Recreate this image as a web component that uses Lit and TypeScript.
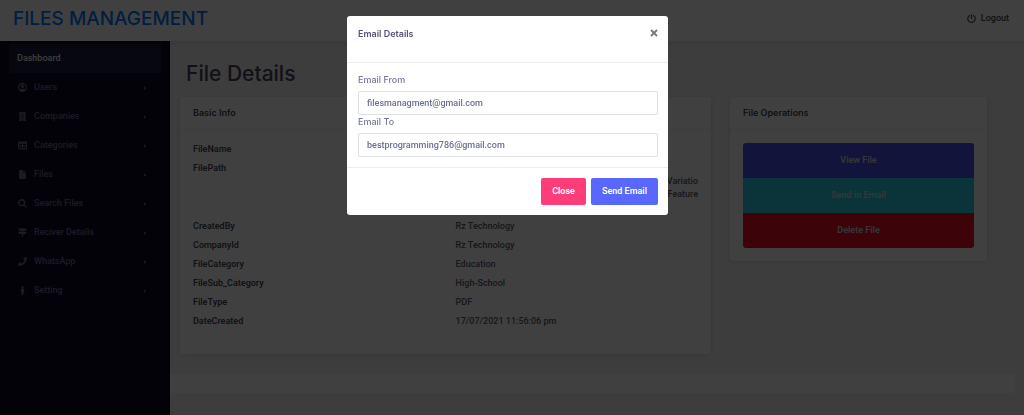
import { LitElement, html, css, svg } from "lit";
import { customElement } from "lit/decorators.js";

const icons: Record<string, unknown> = {
  user: svg`<path fill-rule="evenodd" d="M8 0a8 8 0 1 0 0 16A8 8 0 0 0 8 0zm0 2a6 6 0 0 1 5 9.300c-.6-.9-1.600-1.300-2.600-1.300-.8 0-1.200.4-2.400.4S6.400 10 5.600 10c-1 0-2 .4-2.600 1.300A6 6 0 0 1 8 2zm0 1.200a3 3 0 1 0 0 6 3 3 0 0 0 0-6z"/>`,
  building: svg`<path fill-rule="evenodd" d="M2 0h12v1h-.5v14h.5v1H9v-3H7v3H2v-1h.5V1H2zM5 2.500v1.700h1.500V2.500zm2.300 0v1.700h1.500V2.500zm2.300 0v1.700H11V2.500zM5 5.800v1.700h1.500V5.800zm2.300 0v1.700h1.500V5.800zm2.300 0v1.700H11V5.800zM5 9v1.700h1.500V9zm2.300 0v1.700h1.500V9zm2.300 0v1.700H11V9z"/>`,
  table: svg`<path fill-rule="evenodd" d="M1.500 1h13A1.500 1.500 0 0 1 16 2.500v11a1.500 1.500 0 0 1-1.500 1.500h-13A1.500 1.500 0 0 1 0 13.500v-11A1.500 1.500 0 0 1 1.500 1zM2 5v3h5V5zm7 0v3h5V5zM2 10v3h5v-3zm7 0v3h5v-3z"/>`,
  file: svg`<path d="M2 .8A.8.8 0 0 1 2.800 0H9v4.300c0 .4.300.7.7.7H14v10.200a.8.8 0 0 1-.8.8H2.800a.8.8 0 0 1-.8-.8zM10 0l4 4h-4z"/>`,
  search: svg`<path fill-rule="evenodd" d="M6.500 0a6.500 6.500 0 0 1 5.200 10.400l4.100 4.100-1.400 1.400-4.100-4.100A6.500 6.500 0 1 1 6.500 0zm0 2.500a4 4 0 1 0 0 8 4 4 0 0 0 0-8z"/>`,
  signs: svg`<path d="M7 0h2v1h4.500L16 3l-2.500 2H9v1.500h5.500v4H9V16H7v-5.500H2.500L0 8.500l2.500-2H7V5H1.500V1H7z"/>`,
  phone: svg`<path d="M15.500.8 12.300 0c-.4 0-.7.100-.9.500L9.900 4c-.1.300 0 .7.200.9L12 6.400A11.600 11.600 0 0 1 6.400 12l-1.500-1.900c-.2-.2-.6-.3-.9-.2L.5 11.400c-.4.200-.5.500-.5.900l.8 3.100c.100.4.4.6.7.6C9.500 16 16 9.500 16 1.500c0-.3-.2-.6-.5-.7z"/>`,
  person: svg`<path d="M8 0a2 2 0 1 1 0 4 2 2 0 0 1 0-4zM6.500 4.500h3A1.500 1.500 0 0 1 11 6v4.500h-1.200V16H6.200v-5.500H5V6a1.500 1.500 0 0 1 1.500-1.500z"/>`,
  power: svg`<path fill="none" stroke="currentColor" stroke-width="2" stroke-linecap="round" d="M4.400 2.800a6.600 6.600 0 1 0 7.200 0M8 1v7"/>`,
  caret: svg`<path d="M5 3l6 5-6 5z"/>`,
  close: svg`<path fill="none" stroke="currentColor" stroke-width="3.600" d="M2 2l12 12M14 2L2 14"/>`,
};

const icon = (name: string, cls = "icon") =>
  html`<svg class=${cls} viewBox="0 0 16 16" fill="currentColor" aria-hidden="true">${icons[name]}</svg>`;

const menu = [
  ["user", "Users"],
  ["building", "Companies"],
  ["table", "Categories"],
  ["file", "Files"],
  ["search", "Search Files"],
  ["signs", "Reciver Details"],
  ["phone", "WhatsApp"],
  ["person", "Setting"],
];

const details: [string, string[]][] = [
  ["FileName", []],
  ["FilePath", ["", "Variatio", "Feature", ""]],
  ["CreatedBy", ["Rz Technology"]],
  ["CompanyId", ["Rz Technology"]],
  ["FileCategory", ["Education"]],
  ["FileSub_Category", ["High-School"]],
  ["FileType", ["PDF"]],
  ["DateCreated", ["17/07/2021 11:56:06 pm"]],
];

@customElement("app-root")
export class AppRoot extends LitElement {
  static styles = css`
    :host {
      display: block;
      font: 500 9px/13px Roboto, "Liberation Sans", sans-serif;
      color: #74789a;
    }
    * { box-sizing: border-box; }
    a { color: inherit; text-decoration: none; }
    button, input { font: inherit; }
    button { border: 0; cursor: pointer; }
    h1, h2 { margin: 0; }
    h1, h2, .brand, .label { font-family: Inter, "Liberation Sans", sans-serif; }
    .page {
      min-height: 100vh;
      display: flex;
      flex-direction: column;
      background: #f2f2f8;
    }
    .top {
      display: flex;
      align-items: center;
      justify-content: space-between;
      height: 41px;
      padding: 0 15px 4px 13px;
      background: #fff;
      box-shadow: 0 1px 6px rgba(60, 60, 100, 0.15);
      z-index: 1;
    }
    .brand { font-size: 19px; line-height: 24px; font-weight: 500; color: #007bff; }
    .logout {
      display: flex;
      align-items: center;
      gap: 5px;
      color: #48465b;
    }
    .icon { width: 9px; height: 9px; flex: none; }
    .shell { flex: 1; display: flex; }
    .side {
      width: 170px;
      flex: none;
      padding: 3px 9px;
      background: #0c0a24;
    }
    .item {
      display: flex;
      align-items: center;
      gap: 7px;
      height: 29px;
      padding: 0 13px 0 9px;
      color: #686c94;
    }
    .item .name { flex: 1; }
    .item.active { padding-left: 8px; background: #1c1c3c; color: #f0f0f0; }
    .caret { width: 6px; height: 6px; }
    .content { flex: 1; min-width: 0; }
    .title {
      padding: 19px 16px 9px;
      font-size: 21px;
      line-height: 28px;
      font-weight: 500;
      color: #48465b;
    }
    .columns {
      display: grid;
      grid-template-columns: 531fr 257fr;
      align-items: start;
      gap: 19px;
      padding: 0 37px 20px 10px;
    }
    .card {
      background: #fff;
      border-radius: 3px;
      box-shadow: 0 1px 4px rgba(80, 70, 140, 0.14);
    }
    .card-title {
      padding: 9px 13px 10px;
      font-size: 9px;
      line-height: 13px;
      font-weight: 600;
      color: #48465b;
      border-bottom: 1px solid #ebedf2;
    }
    .card-body { padding: 13px; }
    .table-body { padding: 10px 13px 23px; }
    table { width: 100%; border-collapse: collapse; table-layout: fixed; }
    th, td { padding: 3px 0; text-align: left; vertical-align: top; }
    th { width: 52%; font-weight: 600; color: #48465b; }
    td { color: #595d6e; }
    .line { display: block; min-height: 13px; }
    .wrapped .line { text-align: right; }
    .ops { display: flex; flex-direction: column; }
    .op { height: 35px; color: #d8d8d8; font-weight: 600; }
    .view { background: #4c50f0; border-radius: 3px 3px 0 0; }
    .send { background: #28d0e4; }
    .delete { background: #f01024; border-radius: 0 0 3px 3px; }
    .foot { height: 19px; margin: 0 9px 22px 0; background: #fff; }
    .overlay {
      position: fixed;
      inset: 0;
      z-index: 2;
      padding: 16px 25px 16px 16px;
      overflow: auto;
      background: rgba(0, 0, 0, 0.75);
    }
    .modal {
      max-width: 321px;
      margin: 0 auto;
      background: #fff;
      border-radius: 3px;
    }
    .modal-head {
      display: flex;
      justify-content: space-between;
      align-items: flex-start;
      padding: 11px 10px 22px 11px;
      border-bottom: 1px solid #ebedf2;
    }
    .modal-title { font-size: 9px; line-height: 13px; font-weight: 600; color: #54527a; }
    .close-x { display: flex; padding: 2px 0; background: none; color: #777; }
    .close-icon { width: 8px; height: 8px; }
    .modal-body { padding: 10px 10px 10px 11px; }
    .label { display: block; line-height: 14px; margin-bottom: 4px; }
    .field {
      display: block;
      width: 100%;
      height: 24px;
      padding: 0 8px;
      border: 1px solid #dfdfec;
      border-radius: 2px;
      color: #6c7090;
      background: #fff;
    }
    .modal-foot {
      display: flex;
      justify-content: flex-end;
      gap: 5px;
      padding: 10px;
      border-top: 1px solid #ebedf2;
    }
    .btn { height: 27px; padding: 0 11px; border-radius: 2px; color: #fff; font-weight: 600; }
    .btn.pink { background: #fd3c7a; }
    .btn.blue { background: #5867fd; }
  `;

  render() {
    return html`
      <div class="page">
        <header class="top">
          <a class="brand" href="#">FILES MANAGEMENT</a>
          <a class="logout" href="#">${icon("power")}<span>Logout</span></a>
        </header>
        <div class="shell">
          <nav class="side">
            <a class="item active" href="#">Dashboard</a>
            ${menu.map(
              ([glyph, name]) => html`<a class="item" href="#">
                ${icon(glyph)}<span class="name">${name}</span>${icon("caret", "caret")}
              </a>`
            )}
          </nav>
          <main class="content">
            <h1 class="title">File Details</h1>
            <div class="columns">
              <section class="card">
                <h2 class="card-title">Basic Info</h2>
                <div class="table-body">
                  <table>
                    ${details.map(
                      ([name, lines]) => html`<tr>
                        <th scope="row">${name}</th>
                        <td class=${lines.length > 1 ? "wrapped" : ""}>
                          ${lines.map((line) => html`<span class="line">${line}</span>`)}
                        </td>
                      </tr>`
                    )}
                  </table>
                </div>
              </section>
              <section class="card">
                <h2 class="card-title">File Operations</h2>
                <div class="card-body ops">
                  <button class="op view">View File</button>
                  <button class="op send">Send in Email</button>
                  <button class="op delete">Delete File</button>
                </div>
              </section>
            </div>
            <footer class="foot"></footer>
          </main>
        </div>
      </div>
      <div class="overlay">
        <div class="modal" role="dialog" aria-modal="true" aria-labelledby="modal-title">
          <div class="modal-head">
            <h2 class="modal-title" id="modal-title">Email Details</h2>
            <button class="close-x" aria-label="Close dialog">${icon("close", "close-icon")}</button>
          </div>
          <div class="modal-body">
            <label class="label" for="from">Email From</label>
            <input class="field" id="from" type="email" value="filesmanagment@gmail.com" />
            <label class="label" for="to">Email To</label>
            <input class="field" id="to" type="email" value="bestprogramming786@gmail.com" />
          </div>
          <div class="modal-foot">
            <button class="btn pink">Close</button>
            <button class="btn blue">Send Email</button>
          </div>
        </div>
      </div>
    `;
  }
}
